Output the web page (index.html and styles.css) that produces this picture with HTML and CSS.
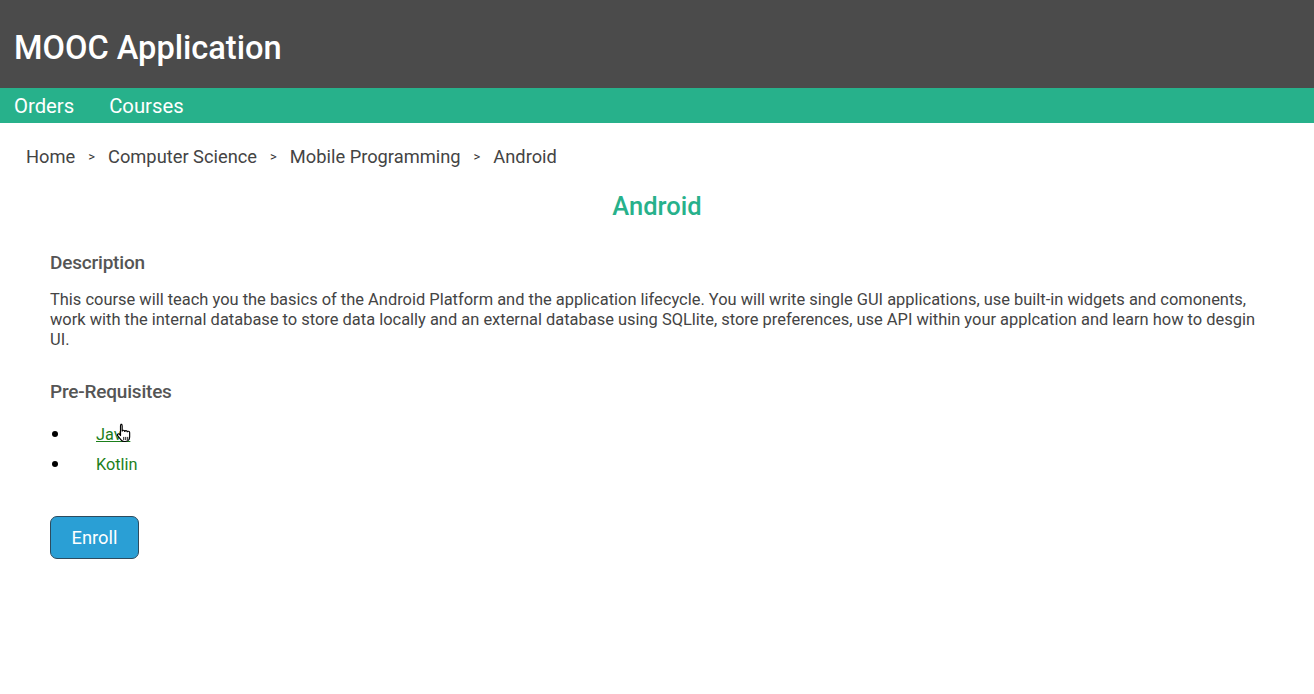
FILE: index.html
```html
<!DOCTYPE html>
<html lang="en">
<head>
<meta charset="utf-8">
<title>MOOC Application</title>
<link rel="stylesheet" href="styles.css">
</head>
<body>
<header class="topbar">
  <h1 class="brand">MOOC Application</h1>
</header>
<nav class="navbar">
  <a class="nav-link" href="#">Orders</a>
  <a class="nav-link" href="#">Courses</a>
</nav>
<div class="breadcrumb">
  <span class="crumb">Home</span><span class="sep">&gt;</span>
  <span class="crumb">Computer Science</span><span class="sep">&gt;</span>
  <span class="crumb">Mobile Programming</span><span class="sep">&gt;</span>
  <span class="crumb">Android</span>
</div>
<main class="course">
  <h2 class="course-title">Android</h2>
  <h3 class="section-title">Description</h3>
  <p class="desc">This course will teach you the basics of the Android Platform and the application lifecycle. You will write single GUI applications, use built-in widgets and comonents, work with the internal database to store data locally and an external database using SQLlite, store preferences, use API within your applcation and learn how to desgin UI.</p>
  <h3 class="section-title prereq-title">Pre-Requisites</h3>
  <ul class="prereq">
    <li class="prereq-item"><a class="prereq-link hover" href="#">Java<svg class="cursor" width="17" height="20" viewBox="0 0 16 19" aria-hidden="true"><path d="M4.5 1.2c.8 0 1.3.6 1.3 1.3v5.2c.2-.5.7-.8 1.2-.8.7 0 1.2.5 1.2 1.1.2-.5.7-.8 1.2-.8.7 0 1.2.5 1.2 1.2.2-.4.6-.6 1.1-.6.7 0 1.2.6 1.2 1.3v4.3c0 2.3-1.7 4.2-4 4.2H7.6c-1.3 0-2.2-.6-2.9-1.6L1.4 12.1c-.4-.6-.2-1.3.3-1.6.6-.4 1.3-.2 1.7.3l.8 1.1V2.5c0-.7.5-1.3 1.3-1.3z" fill="#fff" stroke="#000" stroke-width="1.1" stroke-linejoin="round"/><path d="M7.3 13.2v3M9.2 13.2v3M11.1 13.2v3" stroke="#000" stroke-width=".9"/></svg></a></li>
    <li class="prereq-item"><a class="prereq-link" href="#">Kotlin</a></li>
  </ul>
  <button class="enroll">Enroll</button>
</main>
</body>
</html>
```

FILE: styles.css
```css
* { box-sizing: border-box; }
body {
  margin: 0;
  font-family: Roboto, "Noto Sans", sans-serif;
  background: #fff;
  color: #444;
}
.topbar {
  background: #4b4b4b;
  height: 88px;
  display: flex;
  align-items: center;
  padding: 0 14px;
}
.brand {
  margin: 0;
  color: #fff;
  font-size: 32.6px;
  font-weight: 500;
  padding-top: 8px;
}
.navbar {
  background: #27b18b;
  height: 35px;
  display: flex;
  align-items: center;
  padding: 0 14px;
  gap: 35px;
}
.nav-link {
  color: #fff;
  text-decoration: none;
  font-size: 20.3px;
}
.breadcrumb {
  padding: 22px 26px 0;
  font-size: 18.3px;
  color: #444;
  display: flex;
  align-items: center;
  height: 44px;
}
.sep {
  font-size: 13px;
  margin: 0 13px;
  color: #333;
}
.course {
  padding: 0 50px;
}
.course-title {
  margin: 24px 0 0;
  text-align: center;
  color: #27b18b;
  font-size: 25.5px;
  font-weight: 500;
  line-height: 30px;
}
.section-title {
  margin: 30px 0 0;
  font-size: 19px;
  font-weight: 500;
  color: #555;
  line-height: 24px;
  letter-spacing: -0.2px;
}
.desc {
  margin: 15px 0 0;
  font-size: 16.45px;
  line-height: 20px;
  color: #444;
}
.prereq-title {
  margin-top: 30px;
}
.prereq {
  margin: 15px 0 0;
  padding: 0;
  list-style: none;
}
.prereq-item {
  display: flex;
  align-items: center;
  height: 30px;
  font-size: 16.3px;
}
.prereq-item::before {
  content: "";
  width: 6px;
  height: 6px;
  border-radius: 50%;
  background: #000;
  margin: 0 38px 0 2px;
}
.prereq-link {
  color: #1b7f1b;
  text-decoration: none;
  position: relative;
}
.prereq-link.hover {
  text-decoration: underline;
}
.cursor {
  position: absolute;
  left: 20px;
  top: -2px;
}
.enroll {
  margin-top: 37px;
  width: 89px;
  height: 43px;
  background: #2a9fd5;
  color: #fff;
  border: 1px solid #2d4b5e;
  border-radius: 7px;
  font-family: Roboto, "Noto Sans", sans-serif;
  font-size: 18.3px;
}
```
